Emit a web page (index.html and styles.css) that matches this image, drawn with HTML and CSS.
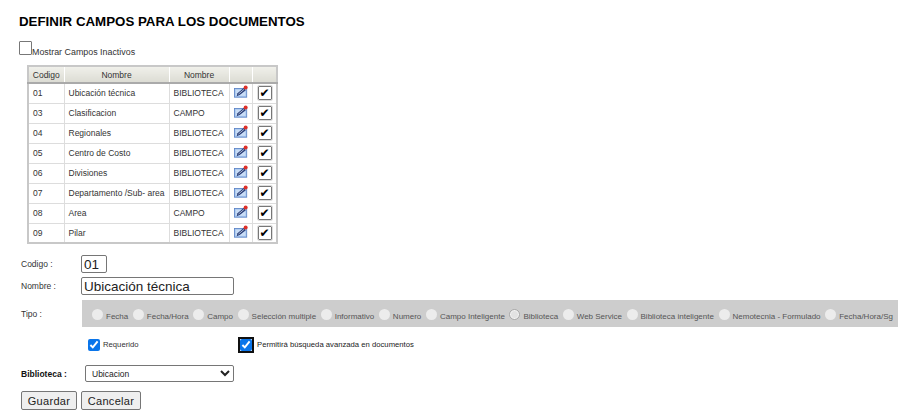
FILE: index.html
```html
<!DOCTYPE html>
<html lang="es">
  <head>
    <meta charset="UTF-8" />
    <title>Definir campos</title>
    <link rel="stylesheet" href="styles.css">
  </head>
  <body>
    <svg class="sprites" width="0" height="0">
      <symbol id="edit" viewBox="0 0 16 14">
        <rect x="0.5" y="3.5" width="14" height="10" fill="#a9c8ee" stroke="#5f86c8" />
        <path d="M2 5h11v7H2z" fill="#c9ddf6" />
        <path d="M3 12.5l1-3.5 7-6 2.5 2.500-7 5.500z" fill="#2a3f78" />
        <path d="M5 10l6.500-5.500" stroke="#dfe8f6" stroke-width="0.8" />
        <circle cx="13.300" cy="2.500" r="2.300" fill="#dd2f28" />
      </symbol>
    </svg>

    <h1 class="title">DEFINIR CAMPOS PARA LOS DOCUMENTOS</h1>

    <div class="inactive">
      <input type="checkbox" class="big-check" />
      <label>Mostrar Campos Inactivos</label>
    </div>

    <table class="grid">
      <thead>
        <tr>
          <th class="c-code">Codigo</th>
          <th class="c-name">Nombre</th>
          <th class="c-type">Nombre</th>
          <th class="c-icon"></th>
          <th class="c-check"></th>
        </tr>
      </thead>
      <tbody>
        <tr>
          <td>01</td><td>Ubicación técnica</td><td>BIBLIOTECA</td>
          <td class="mid"><svg class="edit"><use href="#edit" /></svg></td>
          <td class="mid"><span class="tick">&#10004;</span></td>
        </tr>
        <tr>
          <td>03</td><td>Clasificacion</td><td>CAMPO</td>
          <td class="mid"><svg class="edit"><use href="#edit" /></svg></td>
          <td class="mid"><span class="tick">&#10004;</span></td>
        </tr>
        <tr>
          <td>04</td><td>Regionales</td><td>BIBLIOTECA</td>
          <td class="mid"><svg class="edit"><use href="#edit" /></svg></td>
          <td class="mid"><span class="tick">&#10004;</span></td>
        </tr>
        <tr>
          <td>05</td><td>Centro de Costo</td><td>BIBLIOTECA</td>
          <td class="mid"><svg class="edit"><use href="#edit" /></svg></td>
          <td class="mid"><span class="tick">&#10004;</span></td>
        </tr>
        <tr>
          <td>06</td><td>Divisiones</td><td>BIBLIOTECA</td>
          <td class="mid"><svg class="edit"><use href="#edit" /></svg></td>
          <td class="mid"><span class="tick">&#10004;</span></td>
        </tr>
        <tr>
          <td>07</td><td>Departamento /Sub- area</td><td>BIBLIOTECA</td>
          <td class="mid"><svg class="edit"><use href="#edit" /></svg></td>
          <td class="mid"><span class="tick">&#10004;</span></td>
        </tr>
        <tr>
          <td>08</td><td>Area</td><td>CAMPO</td>
          <td class="mid"><svg class="edit"><use href="#edit" /></svg></td>
          <td class="mid"><span class="tick">&#10004;</span></td>
        </tr>
        <tr>
          <td>09</td><td>Pilar</td><td>BIBLIOTECA</td>
          <td class="mid"><svg class="edit"><use href="#edit" /></svg></td>
          <td class="mid"><span class="tick">&#10004;</span></td>
        </tr>
      </tbody>
    </table>

    <div class="form">
      <div class="row row-code">
        <label class="lbl">Codigo :</label>
        <input class="text short" type="text" value="01" />
      </div>
      <div class="row row-name">
        <label class="lbl">Nombre :</label>
        <input class="text long" type="text" value="Ubicación técnica" />
      </div>
      <div class="row row-type">
        <label class="lbl">Tipo :</label>
        <div class="types">
          <span class="opt"><i class="radio"></i>Fecha</span>
          <span class="opt"><i class="radio"></i>Fecha/Hora</span>
          <span class="opt"><i class="radio"></i>Campo</span>
          <span class="opt"><i class="radio"></i>Selección multiple</span>
          <span class="opt"><i class="radio"></i>Informativo</span>
          <span class="opt"><i class="radio"></i>Numero</span>
          <span class="opt"><i class="radio"></i>Campo Inteligente</span>
          <span class="opt"><i class="radio on"></i>Biblioteca</span>
          <span class="opt"><i class="radio"></i>Web Service</span>
          <span class="opt"><i class="radio"></i>Biblioteca inteligente</span>
          <span class="opt"><i class="radio"></i>Nemotecnia - Formulado</span>
          <span class="opt"><i class="radio"></i>Fecha/Hora/Sg</span>
        </div>
      </div>
      <div class="row row-flags">
        <span class="flag flag-req"><input type="checkbox" checked />Requerido</span>
        <span class="flag flag-adv"><input type="checkbox" class="focused" checked /><span class="adv-text">Permitirá búsqueda avanzada en documentos</span></span>
      </div>
      <div class="row row-lib">
        <label class="lbl strong">Biblioteca :</label>
        <select class="lib"><option>Ubicacion</option></select>
      </div>
      <div class="actions">
        <button class="btn btn-save">Guardar</button>
        <button class="btn btn-cancel">Cancelar</button>
      </div>
    </div>
  </body>
</html>
```

FILE: styles.css
```css
* {
  box-sizing: border-box;
}

body {
  margin: 0;
  padding: 15px 19px 0;
  font-family: "Liberation Sans", Arial, sans-serif;
  font-size: 8.5px;
  color: #222;
  background: #fff;
  height: 416px;
  overflow: hidden;
}

.sprites {
  display: block;
  height: 0;
}

.title {
  margin: 0;
  font-size: 13.3px;
  line-height: 14px;
  font-weight: bold;
  color: #000;
}

.inactive {
  display: flex;
  align-items: flex-end;
  margin-top: 11px;
  height: 15px;
}

.big-check {
  appearance: none;
  width: 13px;
  height: 14px;
  margin: 0;
  border: 1px solid #777;
  border-radius: 1px;
  background: #fff;
}

.inactive label {
  font-size: 8.9px;
  line-height: 10px;
  color: #333;
  margin-bottom: -2px;
}

.grid {
  margin: 10px 0 0 8px;
  width: 249px;
  border-collapse: collapse;
  table-layout: fixed;
  border: 2px solid #c8c8c8;
}

.grid th {
  height: 17px;
  padding: 0;
  font-weight: normal;
  background: linear-gradient(#f0f0ea, #dcdcd4);
  border-left: 1px solid #fff;
  border-bottom: 2px solid #aaa;
  color: #333;
}

.grid td {
  height: 20px;
  padding: 0 0 0 4px;
  border: 1px solid #ddd;
  color: #333;
  white-space: nowrap;
}

.grid td.mid {
  padding: 0;
  text-align: center;
}

.c-code { width: 36px; }
.c-name { width: 105px; }
.c-type { width: 60px; }
.c-icon { width: 23px; }
.c-check { width: 25px; }

.edit {
  display: block;
  width: 14px;
  height: 13px;
  margin: 0 0 3px 4px;
}

.tick {
  display: block;
  width: 14px;
  height: 14px;
  margin: 0 0 0 5px;
  border: 1px solid #777;
  outline: 1px solid #ddd;
  border-radius: 1px;
  background: #fff;
  color: #000;
  font-family: "DejaVu Sans", sans-serif;
  font-size: 12px;
  line-height: 12px;
  text-align: center;
}

.form {
  margin-top: 11px;
}

.row {
  display: flex;
  align-items: center;
}

.lbl {
  width: 62px;
  padding-left: 2px;
  color: #333;
}

.strong {
  font-weight: bold;
  color: #111;
  width: 66px;
}

.text {
  height: 18px;
  padding: 0 2px;
  border: 1px solid #767676;
  border-radius: 2px;
  font-family: "Liberation Sans", Arial, sans-serif;
  font-size: 13.5px;
  color: #222;
  background: #fff;
}

.short { width: 26px; }
.long { width: 153px; }

.row-name {
  margin-top: 4px;
}

.row-type {
  margin-top: 5px;
  height: 27px;
}

.row-type .lbl {
  width: 63px;
}

.types {
  display: flex;
  align-items: center;
  width: 816px;
  height: 27px;
  padding: 6px 0 0 10px;
  background: #cdcdcd;
  white-space: nowrap;
  color: #555;
  font-size: 8px;
  line-height: 10px;
}

.opt {
  display: flex;
  align-items: center;
  margin-right: 4.6px;
}

.radio {
  width: 11px;
  height: 11px;
  margin: -5px 3px 0 0;
  border-radius: 50%;
  background: #ececec;
}

.radio.on {
  background: #e2e2e2;
  border: 1px solid #a8a8a8;
  box-shadow: inset 0 0 0 1px #f4f4f4;
}

.row-flags {
  margin-top: 9px;
  height: 17px;
}

.flag {
  display: flex;
  align-items: center;
  color: #333;
  font-size: 7.7px;
}

.flag input {
  width: 12px;
  height: 12px;
  margin: 0 3px 0 0;
  accent-color: #0a75ea;
}

.flag-req {
  margin-left: 69px;
  width: 152px;
}

.flag-adv input.focused {
  outline: 2px solid #101010;
  outline-offset: 0;
  border-radius: 2px;
}

.flag-adv input {
  margin: 0 5px 0 0;
}

.adv-text {
  color: #222;
}

.row-lib {
  margin-top: 12px;
}

.lib {
  width: 149px;
  height: 17px;
  padding: 0 0 0 2px;
  font-family: "Liberation Sans", Arial, sans-serif;
  font-size: 8.5px;
  color: #222;
  background: #fff;
  border: 1px solid #767676;
  border-radius: 2px;
}

.actions {
  display: flex;
  gap: 4px;
  margin: 9px 0 0 2px;
}

.btn {
  height: 19px;
  padding: 0;
  font-family: "Liberation Sans", Arial, sans-serif;
  font-size: 11px;
  letter-spacing: 0.3px;
  color: #222;
  background: #efefef;
  border: 1px solid #767676;
  border-radius: 2px;
}

.btn-save { width: 56px; }
.btn-cancel { width: 60px; }
```
